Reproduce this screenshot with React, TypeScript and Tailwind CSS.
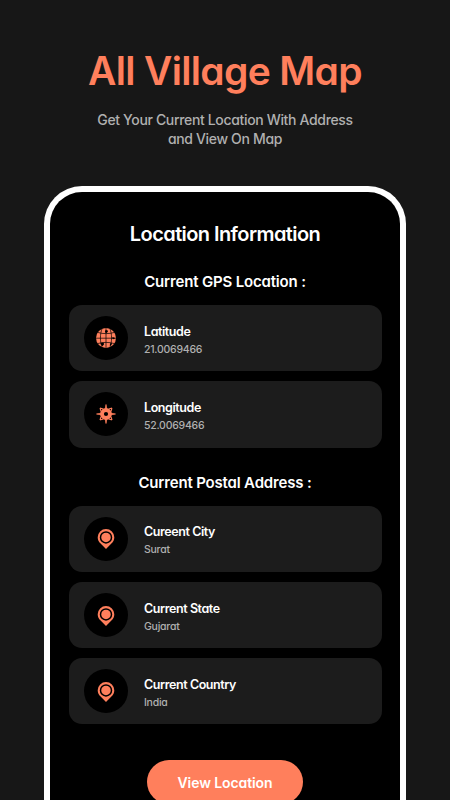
import type { ReactNode } from "react";

// Globe with graticule, shown next to the latitude
function GlobeIcon() {
  return (
    <svg className="size-5" viewBox="0 0 20 20" fill="none">
      <circle cx="10" cy="10" r="10" fill="#ff7f5c" />
      <g stroke="#000" strokeWidth="0.7">
        <path d="M0 10.200h20M10 0v20M2 4.500c5 1.500 11 1.500 16 0M2 15.500c5-1.500 11-1.500 16 0" />
        <path d="M6.300 0C3.800 6 3.800 14 6.300 20M13.700 0c2.500 6 2.500 14 0 20" />
      </g>
      <path
        d="M9 2.500l2.200-.5.8 1.500-1.300 1.500-1.600-.6zM16.500 9.200l1.800.2.7 1.200-1.600.7-1.300-1zM4.500 15l2.800-.4.9 1.500-1.600 2.200-1.300-1.200zM14 15.600l2-.6-.6 2-1.600 1z"
        fill="#000"
      />
    </svg>
  );
}

// Compass rose, shown next to the longitude
function CompassIcon() {
  return (
    <svg className="size-5" viewBox="0 0 20 20" fill="none">
      <path
        d="M10 .5l1 5.500h-2zM10 19.500l-1-5.500h2zM.5 10l5.500-1v2zM19.500 10l-5.500 1v-2z"
        fill="#ff7f5c"
        stroke="#ff7f5c"
        strokeWidth="0.7"
      />
      <path
        d="M4 4l3.300 1M4 4l1 3.300M16 4l-3.300 1M16 4l-1 3.300M16 16l-3.300-1M16 16l-1-3.300M4 16l3.300-1M4 16l1-3.300"
        stroke="#ff7f5c"
        strokeWidth="1.100"
      />
      <circle cx="10" cy="10" r="4" stroke="#ff7f5c" strokeWidth="3.800" />
    </svg>
  );
}

function PinIcon() {
  return (
    <svg className="mt-px h-5 w-[18px]" viewBox="0 0 18 20">
      <path
        d="M9 0A8.300 8.300 0 0 0 .7 8.300c0 2.600 1 4.500 2.900 6.300L9 20l5.400-5.400c1.900-1.800 2.900-3.700 2.900-6.300A8.300 8.300 0 0 0 9 0z"
        fill="#ff7f5c"
      />
      <circle cx="9" cy="8.400" r="5.500" fill="#ff7f5c" stroke="#000" strokeWidth="1.500" />
    </svg>
  );
}

interface InfoCardProps {
  icon: ReactNode;
  label: string;
  value: string;
}

function InfoCard({ icon, label, value }: InfoCardProps) {
  return (
    <div className="flex h-[66.300px] items-center rounded-[13px] bg-[#1c1c1c] pl-[15px]">
      <div className="flex size-11 shrink-0 items-center justify-center rounded-full bg-black">
        {icon}
      </div>
      <div className="ml-[16.500px] whitespace-nowrap pt-[5px]">
        <p className="text-[12.500px] leading-[18px] font-semibold tracking-[-0.42px] text-white">
          {label}
        </p>
        <p className="text-[10.500px] leading-[18px] font-medium tracking-[-0.25px] text-[#b0b0b0]">
          {value}
        </p>
      </div>
    </div>
  );
}

export default function App() {
  return (
    <main className="flex h-[800px] w-[450px] flex-col items-center overflow-hidden bg-[#171717] font-['Inter',sans-serif] [font-feature-settings:'cv11']">
      <h1 className="mt-[47px] text-[39px] leading-[48px] font-semibold tracking-[-0.67px] text-[#ff7f5c]">
        All Village Map
      </h1>
      <p className="mt-[15px] text-center text-[14px] leading-[19px] font-medium tracking-[-0.34px] text-[#b0b0b0]">
        Get Your Current Location With Address
        <br />
        and View On Map
      </p>

      <section className="mt-[38px] h-[660px] w-[362px] shrink-0 rounded-t-[38px] border-6 border-b-0 border-white bg-black px-[18.500px]">
        <h2 className="mt-[28px] text-center text-[20px] leading-7 font-semibold tracking-[-0.58px] text-white">
          Location Information
        </h2>

        <h3 className="mt-[24px] text-center text-[15px] leading-5 font-semibold tracking-[-0.17px] text-white">
          Current GPS Location :
        </h3>
        <div className="mt-[13px] flex flex-col gap-[10px]">
          <InfoCard icon={<GlobeIcon />} label="Latitude" value="21.0069466" />
          <InfoCard icon={<CompassIcon />} label="Longitude" value="52.0069466" />
        </div>

        <h3 className="mt-[25px] text-center text-[15px] leading-5 font-semibold tracking-[-0.17px] text-white">
          Current Postal Address :
        </h3>
        <div className="mt-[13px] flex flex-col gap-[10px]">
          <InfoCard icon={<PinIcon />} label="Cureent City" value="Surat" />
          <InfoCard icon={<PinIcon />} label="Current State" value="Gujarat" />
          <InfoCard icon={<PinIcon />} label="Current Country" value="India" />
        </div>

        <button className="mx-auto mt-9 flex h-11 w-[155.500px] items-center justify-center rounded-full bg-[#ff7f5c] text-[14px] font-semibold tracking-[-0.1px] text-white">
          View Location
        </button>
      </section>
    </main>
  );
}
